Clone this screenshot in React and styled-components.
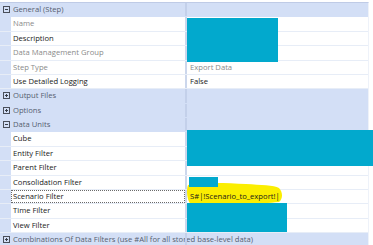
import React from "react";
import styled, { createGlobalStyle } from "styled-components";

const Global = createGlobalStyle`
  html, body { margin: 0; padding: 0; background: #ffffff; }
  body { font-family: "Open Sans", "Noto Sans", sans-serif; }
`;

const Page = styled.div`
  position: relative;
  width: 373px;
  height: 245px;
  overflow: hidden;
  background: #ffffff;
  padding-top: 2px;
  box-sizing: border-box;
`;

const Grid = styled.div`
  width: 369px;
  border-top: 1px solid #bfcbe6;
  border-right: 1px solid #eef2f9;
  box-sizing: border-box;
  background: #d5e0f6;
`;

const Row = styled.div`
  display: grid;
  grid-template-columns: 11px 174px 2px 1fr;
  height: 14.375px;
  box-sizing: border-box;
  font-size: 7.65px;
  font-weight: 500;
  line-height: 13.375px;
  white-space: nowrap;
  background: ${(p) => (p.$cat ? "#d3dff6" : "transparent")};
  border-bottom: 1px solid ${(p) => (p.$cat ? "#d3dff6" : "#e7edf7")};
`;

const Gutter = styled.div`
  display: flex;
  align-items: center;
  justify-content: center;
  background: #d3dff6;
`;

const Toggle = styled.span`
  display: inline-flex;
  width: 5px;
  height: 5px;
  border: 1px solid #4a4f5a;
  position: relative;
  margin-left: 1px;
  &::before {
    content: "";
    position: absolute;
    left: 1px;
    right: 1px;
    top: 2px;
    height: 1px;
    background: #3a3f48;
  }
  &::after {
    content: "";
    display: ${(p) => (p.$open ? "none" : "block")};
    position: absolute;
    top: 1px;
    bottom: 1px;
    left: 2px;
    width: 1px;
    background: #3a3f48;
  }
`;

const NameCell = styled.div`
  padding-left: 2px;
  background: ${(p) => (p.$cat ? "transparent" : "#ffffff")};
  color: ${(p) => (p.$cat ? "#566070" : p.$muted ? "#8a8a8a" : "#1a1a1a")};
  overflow: visible;
  box-sizing: border-box;
  outline: ${(p) => (p.$focus ? "1px dotted #6a6a6a" : "none")};
  outline-offset: -1px;
`;

const Divider = styled.div`
  position: relative;
  z-index: 1;
  background: ${(p) => (p.$cat ? "#c3d0ea" : "#ccd7ec")};
`;

const ValueCell = styled.div`
  position: relative;
  padding-left: 3px;
  background: ${(p) => (p.$cat ? "transparent" : "#ffffff")};
  color: ${(p) => (p.$muted ? "#8a8a8a" : "#1a1a1a")};
  overflow: visible;
`;

const ValueText = styled.span`
  position: relative;
  z-index: 2;
`;

const Redact = styled.div`
  position: absolute;
  background: #02a9cd;
  z-index: 3;
`;

const Highlight = styled.svg`
  position: absolute;
  left: -1px;
  top: -8px;
  z-index: 1;
`;

const rows = [
  { cat: true, open: true, name: "General (Step)" },
  { name: "Name", muted: true },
  { name: "Description" },
  { name: "Data Management Group", muted: true },
  { name: "Step Type", muted: true, value: "Export Data", vmuted: true },
  { name: "Use Detailed Logging", value: "False" },
  { cat: true, name: "Output Files" },
  { cat: true, name: "Options" },
  { cat: true, open: true, name: "Data Units" },
  { name: "Cube" },
  { name: "Entity Filter" },
  { name: "Parent Filter" },
  { name: "Consolidation Filter" },
  { name: "Scenario Filter", focus: true, value: "S#|!Scenario_to_export!|", marked: true },
  { name: "Time Filter" },
  { name: "View Filter" },
  {
    cat: true,
    name: "Combinations Of Data Filters (use #All for all stored base-level data)",
  },
];

export default function App() {
  return (
    <>
      <Global />
      <Page>
        <Grid>
          {rows.map((r, i) => (
            <Row key={i} $cat={r.cat}>
              <Gutter>{r.cat && <Toggle $open={r.open} />}</Gutter>
              <NameCell $cat={r.cat} $muted={r.muted} $focus={r.focus}>
                {r.name}
              </NameCell>
              <Divider $cat={r.cat} />
              <ValueCell $cat={r.cat} $muted={r.vmuted}>
                {r.marked && (
                  <Highlight width="98" height="23" viewBox="0 0 98 23">
                    <path
                      d="M2 3 C18 0 40 1 60 2 C75 3 88 3 93 6 C97 10 97 17 93 20 C76 22 40 22 5 22 C1 20 0 7 2 3 Z"
                      fill="#fbee00"
                    />
                  </Highlight>
                )}
                <ValueText>{r.value || ""}</ValueText>
              </ValueCell>
            </Row>
          ))}
        </Grid>
        <Redact style={{ left: 187, top: 18, width: 91, height: 44 }} />
        <Redact style={{ left: 187, top: 130, width: 186, height: 36 }} />
        <Redact style={{ left: 189, top: 177, width: 29, height: 10 }} />
        <Redact style={{ left: 187, top: 203, width: 100, height: 29 }} />
      </Page>
    </>
  );
}
